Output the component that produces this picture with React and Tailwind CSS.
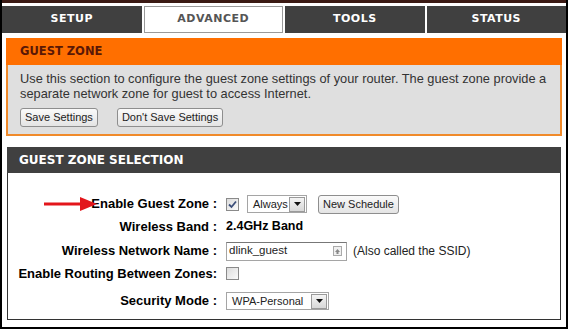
import React from "react";

const V = { fontFamily: '"DejaVu Sans", "Liberation Sans", sans-serif' };
const T = { fontFamily: '"Liberation Sans", Arial, sans-serif' };

function Check({ checked }) {
  return (
    <span className="inline-flex h-[13px] w-[13px] items-center justify-center border border-[#8a8a8a] bg-gradient-to-br from-[#dcdcdc] to-[#fbfbfb]">
      {checked && (
        <svg width="9" height="9" viewBox="0 0 9 9">
          <path d="M1 4.5 L3.5 7 L8 1.5" fill="none" stroke="#3c4f7a" strokeWidth="1.8" />
        </svg>
      )}
    </span>
  );
}

function DropBtn() {
  return (
    <span className="flex h-[15px] w-[16px] items-center justify-center border border-[#9a9a9a] bg-gradient-to-b from-[#f4f4f4] to-[#d8d8d8]">
      <svg width="7" height="4" viewBox="0 0 7 4">
        <path d="M0 0 L7 0 L3.5 4 Z" fill="#111" />
      </svg>
    </span>
  );
}

function Select({ value, w }) {
  return (
    <span className={`flex h-[18px] ${w} items-center justify-between border border-[#a5a5a5] bg-white pl-[5px] pr-[1px] text-[11px] text-[#222]`}>
      <span>{value}</span>
      <DropBtn />
    </span>
  );
}

function Btn({ children, cls = "" }) {
  return (
    <span className={`inline-flex h-[19px] items-center rounded-[3px] border border-[#8e8e8e] bg-gradient-to-b from-[#fafafa] to-[#e4e4e4] px-[4px] text-[11px] text-[#222] ${cls}`}>
      {children}
    </span>
  );
}

function Row({ label, h, children }) {
  return (
    <div className={`flex items-center ${h}`}>
      <div className="w-[212px] shrink-0 whitespace-nowrap pr-[3px] text-right text-[13px] font-bold text-black">{label}</div>
      <div className="flex items-center pl-[6px]">{children}</div>
    </div>
  );
}

export default function App() {
  const tab = "flex items-center justify-center text-[11px] font-bold tracking-[0.5px]";
  return (
    <div style={T} className="relative h-[329px] w-[568px] overflow-hidden border-x-2 border-b-2 border-black bg-white">
      <div className="h-[3px] bg-[#3b1a14]" />
      <div style={V} className="mt-[3px] grid h-[27px] grid-cols-4 gap-[2px] px-0">
        <div className={`${tab} bg-[#404040] text-white`}>SETUP</div>
        <div className={`${tab} border border-[#9a9a9a] bg-white text-[#555]`}>ADVANCED</div>
        <div className={`${tab} bg-[#404040] text-white`}>TOOLS</div>
        <div className={`${tab} bg-[#404040] text-white`}>STATUS</div>
      </div>

      <div className="mx-[4px] mt-[5px] h-[98px] border-x-2 border-b-2 border-[#f08a2a] bg-[#dfdfdf]">
        <div style={V} className="-mx-[2px] flex h-[27px] items-center bg-[#ff6f00] pl-[14px] text-[11.5px] font-bold text-[#5a1806]">
          GUEST ZONE
        </div>
        <div className="whitespace-nowrap px-[12px] pt-[6px] text-[12.8px] leading-[15px] text-[#333]">
          Use this section to configure the guest zone settings of your router. The guest zone provide a
          <br />
          separate network zone for guest to access Internet.
        </div>
        <div className="mt-[7px] flex gap-[19px] px-[12px]">
          <Btn>Save Settings</Btn>
          <Btn>Don't Save Settings</Btn>
        </div>
      </div>

      <div className="mx-[5px] mt-[11px] h-[173px] border border-[#333]">
        <div style={V} className="-mx-px -mt-px flex h-[26px] items-center bg-[#404040] pl-[12px] text-[12px] font-bold text-white">
          GUEST ZONE SELECTION
        </div>
        <div className="pt-[20px]">
          <Row label="Enable Guest Zone :" h="h-[22px]">
            <Check checked />
            <span className="ml-[8px]"><Select value="Always" w="w-[60px]" /></span>
            <Btn cls="ml-[11px]">New Schedule</Btn>
          </Row>
          <Row label="Wireless Band :" h="h-[23px]">
            <span className="text-[12.5px] font-bold text-black">2.4GHz Band</span>
          </Row>
          <Row label="Wireless Network Name :" h="h-[26px]">
            <span className="flex h-[19px] w-[121px] items-center justify-between border border-[#a5a5a5] border-t-[#777] bg-white pl-[2px] pr-[4px] text-[11.5px] text-[#222]">
              <span>dlink_guest</span>
              <span className="flex h-[10px] w-[9px] items-center justify-center border border-[#aaa] bg-[#f0f0f0]">
                <svg width="5" height="5" viewBox="0 0 5 5"><path d="M2.5 0 L5 3 L0 3 Z M1.5 3 H3.5 V5 H1.5Z" fill="#888" /></svg>
              </span>
            </span>
            <span className="ml-[6px] text-[12px] text-[#222]">(Also called the SSID)</span>
          </Row>
          <Row label="Enable Routing Between Zones:" h="h-[19px]">
            <Check />
          </Row>
          <Row label="Security Mode :" h="h-[36px]">
            <Select value="WPA-Personal" w="w-[103px]" />
          </Row>
        </div>
      </div>

      <svg className="absolute left-[42px] top-[197px]" width="54" height="14" viewBox="0 0 54 14">
        <path d="M0 7 H40" stroke="#e3161b" strokeWidth="3" />
        <path d="M36 0 L53 7 L36 14 Z" fill="#e3161b" />
      </svg>
    </div>
  );
}
